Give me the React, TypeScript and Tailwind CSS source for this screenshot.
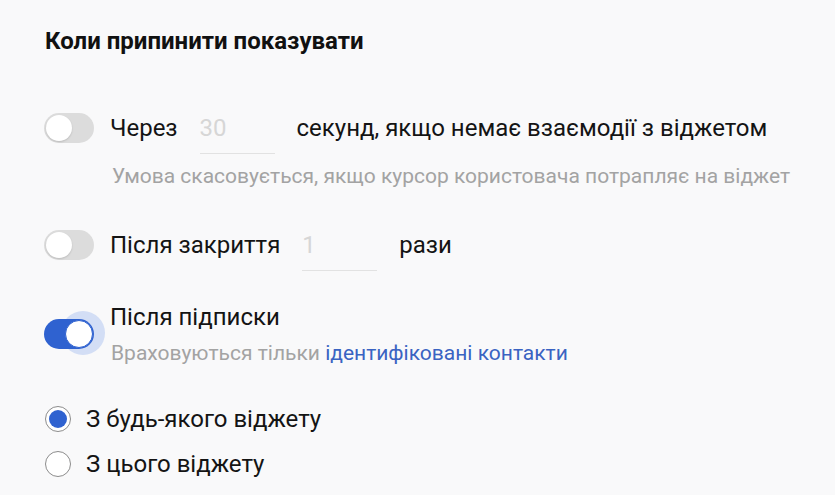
import { useState } from "react"

function Toggle({ on }: { on: boolean }) {
  return (
    <div className="relative w-[50px] h-[30px] shrink-0">
      {on && <div className="absolute left-[17px] top-[-8px] w-[44px] h-[44px] rounded-full bg-[#d3def5]" />}
      <div className={`absolute inset-0 rounded-full ${on ? "bg-[#2f62d0]" : "bg-[#dcdcdc]"}`} />
      {on ? (
        <div className="absolute top-px left-[21px] w-[28px] h-[28px] rounded-full bg-white border border-[#2f62d0]" />
      ) : (
        <div className="absolute top-[2px] left-[2px] w-[26px] h-[26px] rounded-full bg-white shadow-[0_1px_2px_rgba(0,0,0,0.15)]" />
      )}
    </div>
  )
}

function Radio({ checked, label }: { checked: boolean; label: string }) {
  return (
    <div className="flex items-center gap-[15px] h-[30px]">
      <div className="w-[26px] h-[26px] rounded-full border border-[#8c8c8c] bg-white flex items-center justify-center">
        {checked && <div className="w-[18px] h-[18px] rounded-full bg-[#2f62d0]" />}
      </div>
      <span className="text-[24px] leading-[30px] text-[#141414]">{label}</span>
    </div>
  )
}

export default function App() {
  const [seconds] = useState("30")
  const [times] = useState("1")

  return (
    <div className="h-[495px] w-[835px] bg-[#f9f9fa] pl-[44px] pt-[26px] font-['Roboto',sans-serif] text-[#141414]">
      <h2 className="ml-px text-[24px] leading-[30px] font-bold text-[#111]">Коли припинити показувати</h2>

      <div className="mt-[46px] flex items-center h-[52px]">
        <Toggle on={false} />
        <span className="ml-[16px] text-[24px]">Через</span>
        <input
          readOnly
          value={seconds}
          className="mx-[22px] w-[75px] h-[52px] border-b border-[#e2e2e2] bg-transparent text-[24px] text-[#d6d6d6] outline-none"
        />
        <span className="text-[24px]">секунд, якщо немає взаємодії з віджетом</span>
      </div>
      <div className="mt-[9px] pl-[68px] text-[21px] leading-[26px] text-[#a3a3a3]">
        Умова скасовується, якщо курсор користовача потрапляє на віджет
      </div>

      <div className="mt-[30px] flex items-center h-[52px]">
        <Toggle on={false} />
        <span className="ml-[16px] text-[24px]">Після закриття</span>
        <input
          readOnly
          value={times}
          className="mx-[22px] w-[75px] h-[52px] border-b border-[#e2e2e2] bg-transparent text-[24px] text-[#d6d6d6] outline-none"
        />
        <span className="text-[24px]">рази</span>
      </div>

      <div className="mt-[31px] flex items-start">
        <div className="mt-[17px]">
          <Toggle on={true} />
        </div>
        <div className="ml-[16px]">
          <div className="text-[24px] leading-[30px]">Після підписки</div>
          <div className="mt-[8px] ml-px text-[21px] leading-[26px] text-[#a3a3a3]">
            Враховуються тільки <span className="text-[#3a63c2]">ідентифіковані контакти</span>
          </div>
        </div>
      </div>

      <div className="mt-[38px] ml-px">
        <Radio checked={true} label="З будь-якого віджету" />
        <div className="mt-[15px]">
          <Radio checked={false} label="З цього віджету" />
        </div>
      </div>
    </div>
  )
}
